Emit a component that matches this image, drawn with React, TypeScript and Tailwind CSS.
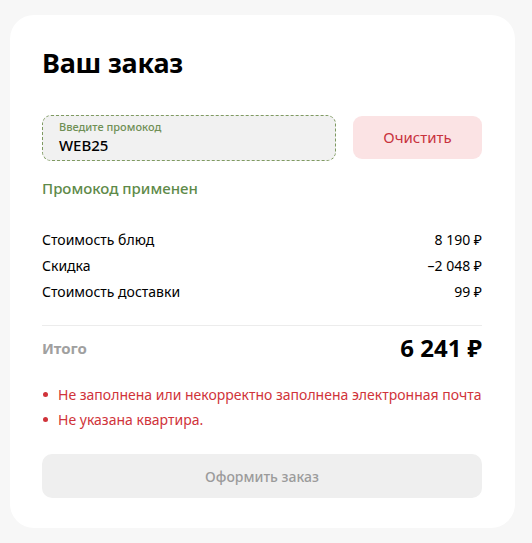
export default function App() {
  const rows = [
    { label: "Стоимость блюд", value: "8 190 ₽" },
    { label: "Скидка", value: "–2 048 ₽" },
    { label: "Стоимость доставки", value: "99 ₽" },
  ]
  const errors = [
    "Не заполнена или некорректно заполнена электронная почта",
    "Не указана квартира.",
  ]

  return (
    <div className="min-h-[543px] bg-[#f7f7f7] pl-[10px] pt-[15px] font-['Noto_Sans',sans-serif] text-black">
      <div className="w-[505px] h-[513px] bg-white rounded-[24px] pl-[32px] pr-[33px] pt-[30px]">
        {/* Title */}
        <h1 className="text-[27px] leading-[36px] font-bold tracking-[-0.2px]">Ваш заказ</h1>

        {/* Promo code */}
        <div className="mt-[34px] flex gap-[17px]">
          <div className="w-[294px] h-[46px] rounded-[9px] border border-dashed border-[#7f9a62] bg-[#f1f1f1] px-[16px] pt-[4px]">
            <div className="text-[11px] leading-[14px] text-[#6f8f55] font-medium">Введите промокод</div>
            <div className="text-[15px] leading-[22px] font-medium">WEB25</div>
          </div>
          <button className="w-[129px] h-[43px] mt-[1px] rounded-[9px] bg-[#fbe3e4] text-[#c8323d] text-[15px]">
            Очистить
          </button>
        </div>

        <div className="mt-[16px] text-[15px] leading-[22px] text-[#5e8a49] font-medium">Промокод применен</div>

        {/* Rows */}
        <div className="mt-[28px] flex flex-col">
          {rows.map((r) => (
            <div key={r.label} className="flex justify-between text-[14px] leading-[26px]">
              <span>{r.label}</span>
              <span>{r.value}</span>
            </div>
          ))}
        </div>

        <div className="mt-[20px] h-px bg-[#ececec]" />

        <div className="mt-[2px] flex justify-between items-center h-[40px]">
          <span className="text-[15px] font-bold text-[#a0a0a0]">Итого</span>
          <span className="text-[24px] font-bold">6 241 ₽</span>
        </div>

        {/* Errors */}
        <ul className="mt-[14px] flex flex-col">
          {errors.map((e) => (
            <li key={e} className="flex items-center text-[14px] leading-[25px] text-[#d0333a]">
              <span className="w-[5px] h-[5px] rounded-full bg-[#d0333a] ml-[1px] mr-[10px]" />
              {e}
            </li>
          ))}
        </ul>

        <button className="mt-[22px] w-full h-[44px] rounded-[10px] bg-[#efefef] text-[#9b9b9b] text-[14px] font-medium">
          Оформить заказ
        </button>
      </div>
    </div>
  )
}
